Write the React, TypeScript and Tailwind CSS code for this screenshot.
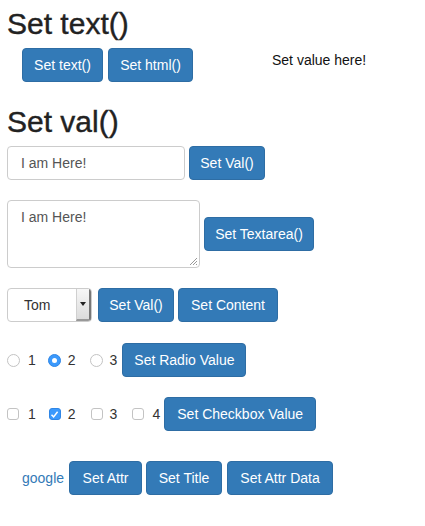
import React from "react";

const btn =
  "h-[34px] bg-[#337ab7] border border-[#2e6da4] rounded-[4px] text-white text-[14px] leading-[20px] whitespace-nowrap flex items-center justify-center shrink-0";

const heading = "text-[30px] leading-[33px] text-[#222] [-webkit-text-stroke:0.4px_#222]";

function Radio({ checked, className = "" }: { checked?: boolean; className?: string }) {
  return checked ? (
    <span className={`w-[13px] h-[13px] rounded-full bg-[#3b99fc] border border-[#2f86e6] flex items-center justify-center shrink-0 ${className}`}>
      <span className="w-[5px] h-[5px] rounded-full bg-white" />
    </span>
  ) : (
    <span className={`w-[13px] h-[13px] rounded-full bg-white border border-[#c3c3c3] shrink-0 ${className}`} />
  );
}

function Check({ checked, className = "" }: { checked?: boolean; className?: string }) {
  return checked ? (
    <span className={`w-[12px] h-[12px] rounded-[3px] bg-[#3b99fc] border border-[#2f86e6] flex items-center justify-center shrink-0 ${className}`}>
      <svg width="9" height="9" viewBox="0 0 9 9">
        <path d="M1.5 4.8 L3.6 6.9 L7.6 1.8" fill="none" stroke="white" strokeWidth="1.5" />
      </svg>
    </span>
  ) : (
    <span className={`w-[12px] h-[12px] rounded-[3px] bg-white border border-[#c3c3c3] shrink-0 ${className}`} />
  );
}

export default function App() {
  return (
    <div
      className="bg-white text-[#333] text-[14px] px-[7px] pb-[30px] min-h-[526px]"
      style={{ fontFamily: '"Liberation Sans", Arial, sans-serif' }}
    >
      {/* Set text() */}
      <h2 className={`pt-[7px] ${heading}`}>Set text()</h2>
      <div className="mt-[8px] ml-[15px] flex items-start">
        <button className={`${btn} w-[81px]`}>Set text()</button>
        <button className={`${btn} w-[85px] ml-[5px]`}>Set html()</button>
        <span className="ml-[79px] mt-[2px] leading-[20px] text-[#111]">Set value here!</span>
      </div>

      {/* Set val() */}
      <h2 className={`mt-[23px] ${heading}`}>Set val()</h2>
      <div className="mt-[8px] flex items-center">
        <div className="w-[178px] h-[34px] border border-[#ccc] rounded-[4px] px-[13px] flex items-center text-[#555]">
          I am Here!
        </div>
        <button className={`${btn} w-[76px] ml-[4px]`}>Set Val()</button>
      </div>

      <div className="mt-[20px] flex items-center">
        <div className="relative w-[193px] h-[68px] border border-[#ccc] rounded-[4px] px-[13px] py-[6px] leading-[20px] text-[#555]">
          I am Here!
          <svg className="absolute right-[1px] bottom-[1px]" width="9" height="9" viewBox="0 0 9 9">
            <path d="M8 1 L1 8 M8 4 L4 8 M8 7 L7 8" stroke="#999" strokeWidth="1" />
          </svg>
        </div>
        <button className={`${btn} w-[110px] ml-[4px]`}>Set Textarea()</button>
      </div>

      <div className="mt-[20px] flex items-center">
        <div className="w-[85px] h-[34px] border border-[#ccc] rounded-[4px] flex overflow-hidden">
          <div className="flex-1 flex items-center pl-[16px] text-[#333]">Tom</div>
          <div className="w-[15px] bg-gradient-to-b from-[#f7f7f7] to-[#dcdcdc] border-l border-[#d0d0d0] border-r-2 border-b-2 border-r-[#777] border-b-[#999] flex items-center justify-center">
            <svg width="6" height="4" viewBox="0 0 6 4">
              <path d="M0 0 L6 0 L3 4 Z" fill="#222" />
            </svg>
          </div>
        </div>
        <button className={`${btn} w-[76px] ml-[6px]`}>Set Val()</button>
        <button className={`${btn} w-[100px] ml-[4px]`}>Set Content</button>
      </div>

      {/* radios */}
      <div className="mt-[21px] flex items-center">
        <Radio />
        <span className="ml-[8px]">1</span>
        <Radio checked className="ml-[12px]" />
        <span className="ml-[7px]">2</span>
        <Radio className="ml-[14px]" />
        <span className="ml-[7px]">3</span>
        <button className={`${btn} w-[124px] ml-[5px]`}>Set Radio Value</button>
      </div>

      {/* checkboxes */}
      <div className="mt-[20px] flex items-center">
        <Check />
        <span className="ml-[9px]">1</span>
        <Check checked className="ml-[13px]" />
        <span className="ml-[7px]">2</span>
        <Check className="ml-[15px]" />
        <span className="ml-[7px]">3</span>
        <Check className="ml-[15px]" />
        <span className="ml-[8px]">4</span>
        <button className={`${btn} w-[152px] ml-[4px]`}>Set Checkbox Value</button>
      </div>

      {/* attr */}
      <div className="mt-[30px] ml-[15px] flex items-center">
        <a className="text-[#337ab7]" href="#">google</a>
        <button className={`${btn} w-[73px] ml-[5px]`}>Set Attr</button>
        <button className={`${btn} w-[76px] ml-[4px]`}>Set Title</button>
        <button className={`${btn} w-[106px] ml-[5px]`}>Set Attr Data</button>
      </div>
    </div>
  );
}
